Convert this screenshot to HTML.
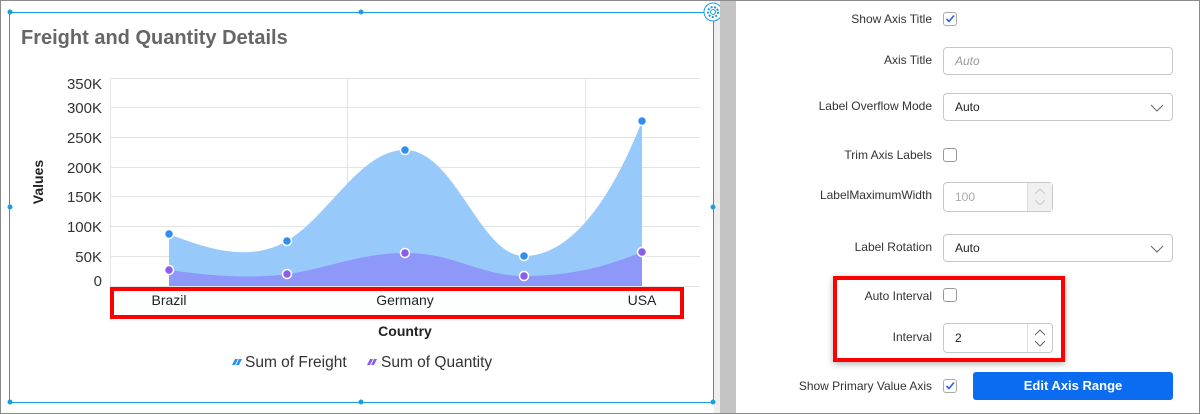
<!DOCTYPE html>
<html><head><meta charset="utf-8"><style>
*{box-sizing:border-box;margin:0;padding:0}
body{width:1200px;height:414px;overflow:hidden;background:#fff;font-family:"Liberation Sans",sans-serif;position:relative}
.frame{position:absolute;left:0;top:0;width:1200px;height:414px;border:1px solid #8a8a8a}
.bar{position:absolute;left:720px;top:1px;width:16px;height:412px;background:#c4c4c4}
.bar2{position:absolute;left:714px;top:1px;width:6px;height:412px;background:#eee}
.lbl{position:absolute;right:268px;font-size:12px;color:#333;text-align:right;white-space:nowrap}
.cb{position:absolute;left:943px;width:14px;height:14px;border:1px solid #999;border-radius:3px;background:#fff}
.inp{position:absolute;left:943px;border:1px solid #c8c8c8;border-radius:4px;background:#fff;font-size:12px;color:#222;padding-left:11px;display:flex;align-items:center}
.spin{position:absolute;right:0;top:0;bottom:0;width:25px;border-left:1px solid #ddd}
</style></head><body>
<div class="frame"></div>
<div class="bar2"></div><div class="bar"></div>
<svg width="720" height="414" style="position:absolute;left:0;top:0">
<g stroke="#e3e3e3" stroke-width="1">
<line x1="110" y1="78.5" x2="700" y2="78.5"/><line x1="110" y1="107.5" x2="700" y2="107.5"/>
<line x1="110" y1="137.5" x2="700" y2="137.5"/><line x1="110" y1="167.5" x2="700" y2="167.5"/>
<line x1="110" y1="196.5" x2="700" y2="196.5"/><line x1="110" y1="226.5" x2="700" y2="226.5"/>
<line x1="110" y1="256.5" x2="700" y2="256.5"/><line x1="110" y1="286.5" x2="700" y2="286.5"/>
<line x1="110.5" y1="78" x2="110.5" y2="290"/><line x1="347.5" y1="78" x2="347.5" y2="290"/><line x1="585.5" y1="78" x2="585.5" y2="290"/>
</g>
<path d="M169,234 C210,250 250,262 287,241 C330,215 360,150 405,150 C455,150 480,256 524,256 C575,256 615,190 642,121 L642,286 L169,286 Z" fill="#97c9fb"/>
<path d="M169,270 C210,276 250,279 287,274 C330,268 360,253 405,253 C455,253 480,276 524,276 C575,276 610,265 642,252 L642,286 L169,286 Z" fill="#8d98f8"/>
<g stroke="#fff" stroke-width="1.5">
<circle cx="169" cy="234" r="4.5" fill="#2f8ff0"/><circle cx="287" cy="241" r="4.5" fill="#2f8ff0"/><circle cx="405" cy="150" r="4.5" fill="#2f8ff0"/><circle cx="524" cy="256" r="4.5" fill="#2f8ff0"/><circle cx="642" cy="121" r="4.5" fill="#2f8ff0"/>
<circle cx="169" cy="270" r="4.5" fill="#8a5cf0"/><circle cx="287" cy="274" r="4.5" fill="#8a5cf0"/><circle cx="405" cy="253" r="4.5" fill="#8a5cf0"/><circle cx="524" cy="276" r="4.5" fill="#8a5cf0"/><circle cx="642" cy="252" r="4.5" fill="#8a5cf0"/>
</g>
<g font-family="Liberation Sans" font-size="15" fill="#333" text-anchor="end">
<text x="102" y="89">350K</text><text x="102" y="113">300K</text><text x="102" y="143">250K</text><text x="102" y="173">200K</text><text x="102" y="202">150K</text><text x="102" y="232">100K</text><text x="102" y="262">50K</text><text x="102" y="286">0</text>
</g>
<text x="43" y="182" transform="rotate(-90 43 182)" text-anchor="middle" font-size="14" font-weight="bold" fill="#222">Values</text>
<text x="21" y="44" font-size="20" font-weight="bold" fill="#666">Freight and Quantity Details</text>
<rect x="112" y="289" width="570" height="28" fill="none" stroke="#f00" stroke-width="4"/>
<g font-size="14" fill="#222" text-anchor="middle"><text x="169" y="305">Brazil</text><text x="405" y="305">Germany</text><text x="642" y="305">USA</text></g>
<text x="405" y="336" text-anchor="middle" font-size="14" font-weight="bold" fill="#222">Country</text>
<path d="M232,365 l3,-6 h3 l-3,6z M236,365 l3,-6 h3 l-3,6z" fill="#2f8ff0"/>
<text x="245" y="367" font-size="15.5" fill="#333">Sum of Freight</text>
<path d="M367,365 l3,-6 h3 l-3,6z M371,365 l3,-6 h3 l-3,6z" fill="#8a5cf0"/>
<text x="381" y="367" font-size="15.5" fill="#333">Sum of Quantity</text>
<g stroke="#1a9ee0" stroke-width="1" fill="none"><rect x="9.5" y="12.5" width="704" height="390"/></g>
<g fill="#1a9ee0"><circle cx="10" cy="12" r="2.5"/><circle cx="361" cy="12" r="2.5"/><circle cx="10" cy="207" r="2.5"/><circle cx="713" cy="207" r="2.5"/><circle cx="10" cy="402" r="2.5"/><circle cx="361" cy="402" r="2.5"/><circle cx="713" cy="402" r="2.5"/></g>
<circle cx="713" cy="12" r="9" fill="#fff" stroke="#1a9ee0"/>
<circle cx="713" cy="12" r="5" fill="none" stroke="#1a9ee0" stroke-dasharray="2 1.5" stroke-width="2"/>
<circle cx="713" cy="12" r="2.5" fill="none" stroke="#1a9ee0"/>
</svg>
<div class="lbl" style="top:12px">Show Axis Title</div>
<div class="cb" style="top:12px;border-color:#aaa"><svg width="12" height="12" style="position:absolute;left:0;top:0"><path d="M2.5,6 L5,8.5 L10,2.5" stroke="#2563eb" stroke-width="1.6" fill="none"/></svg></div>
<div class="lbl" style="top:53px">Axis Title</div>
<div class="inp" style="top:47px;width:230px;height:28px;color:#999;font-style:italic">Auto</div>
<div class="lbl" style="top:99px">Label Overflow Mode</div>
<div class="inp" style="top:93px;width:230px;height:28px">Auto<svg width="14" height="8" style="position:absolute;right:8px;top:10px"><path d="M1,1 L7,7 L13,1" stroke="#666" fill="none"/></svg></div>
<div class="lbl" style="top:148px">Trim Axis Labels</div>
<div class="cb" style="top:148px"></div>
<div class="lbl" style="top:188px">LabelMaximumWidth</div>
<div class="inp" style="top:182px;width:110px;height:30px;color:#aaa">100<div class="spin" style="background:#f0f0f0"><svg width="25" height="28"><path d="M7,11 L12,6 L17,11 M7,17 L12,22 L17,17" stroke="#ccc" fill="none"/></svg></div></div>
<div class="lbl" style="top:240px">Label Rotation</div>
<div class="inp" style="top:234px;width:230px;height:28px">Auto<svg width="14" height="8" style="position:absolute;right:8px;top:10px"><path d="M1,1 L7,7 L13,1" stroke="#666" fill="none"/></svg></div>
<div style="position:absolute;left:833px;top:276px;width:232px;height:86px;border:4px solid #f00;box-shadow:0 2px 6px rgba(0,0,0,.3)"></div>
<div class="lbl" style="top:289px">Auto Interval</div>
<div class="cb" style="top:288px"></div>
<div class="lbl" style="top:330px">Interval</div>
<div class="inp" style="top:323px;width:110px;height:30px">2<div class="spin"><svg width="25" height="28"><path d="M7,11 L12,6 L17,11 M7,17 L12,22 L17,17" stroke="#666" fill="none"/></svg></div></div>
<div class="lbl" style="top:379px">Show Primary Value Axis</div>
<div class="cb" style="top:379px;border-color:#aaa"><svg width="12" height="12" style="position:absolute;left:0;top:0"><path d="M2.5,6 L5,8.5 L10,2.5" stroke="#2563eb" stroke-width="1.6" fill="none"/></svg></div>
<div style="position:absolute;left:973px;top:372px;width:200px;height:28px;background:#0b6cf2;border-radius:3px;color:#fff;font-weight:bold;font-size:13px;text-align:center;line-height:28px">Edit Axis Range</div>
</body></html>
